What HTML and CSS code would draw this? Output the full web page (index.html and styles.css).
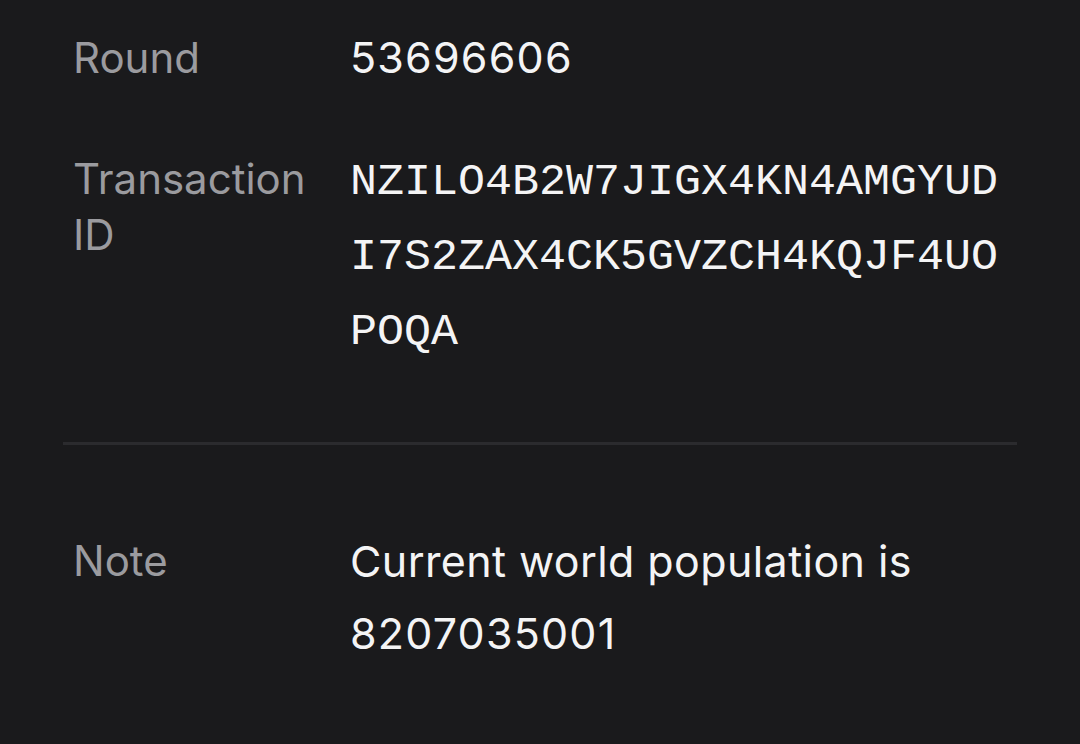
FILE: index.html
```html
<!DOCTYPE html>
<html>
<head>
<meta charset="utf-8">
<link rel="stylesheet" href="styles.css">
</head>
<body>
<div class="panel">
  <div class="row row-round">
    <div class="label">Round</div>
    <div class="value digits">53696606</div>
  </div>
  <div class="row row-tx">
    <div class="label label-multi">Transaction ID</div>
    <div class="value mono">NZILO4B2W7JIGX4KN4AMGYUD I7S2ZAX4CK5GVZCH4KQJF4UO POQA</div>
  </div>
  <div class="divider"></div>
  <div class="row row-note">
    <div class="label note-label">Note</div>
    <div class="value note">Current world population is <span class="digits">8207035001</span></div>
  </div>
</div>
</body>
</html>
```
FILE: styles.css
```css
html, body {
  margin: 0;
  padding: 0;
  background: #1a1a1c;
  height: 100%;
  overflow: hidden;
}
.panel {
  padding: 20px 63px 0;
  font-family: "Inter", "Noto Sans", sans-serif;
}
.row {
  display: flex;
  padding-left: 10px;
}
.label {
  width: 277px;
  flex: none;
  color: #9b9b9f;
  font-size: 42px;
  line-height: 75px;
}
.label-multi {
  line-height: 56px;
  padding-top: 6px;
  width: 252px;
  margin-right: 25px;
}
.value {
  color: #f4f4f5;
  font-size: 43px;
  line-height: 75px;
  flex: 1;
  letter-spacing: 0.4px;
}
.digits {
  letter-spacing: 1.2px;
}
.mono {
  font-family: "Liberation Mono", monospace;
  font-size: 45px;
  line-height: 75px;
  width: 660px;
  flex: none;
  letter-spacing: 0;
  word-break: break-all;
}
.row-tx {
  margin-top: 50px;
}
.divider {
  height: 3px;
  background: #2b2b2e;
  margin-top: 72px;
}
.row-note {
  margin-top: 80px;
}
.note, .note-label {
  line-height: 72px;
}
```
